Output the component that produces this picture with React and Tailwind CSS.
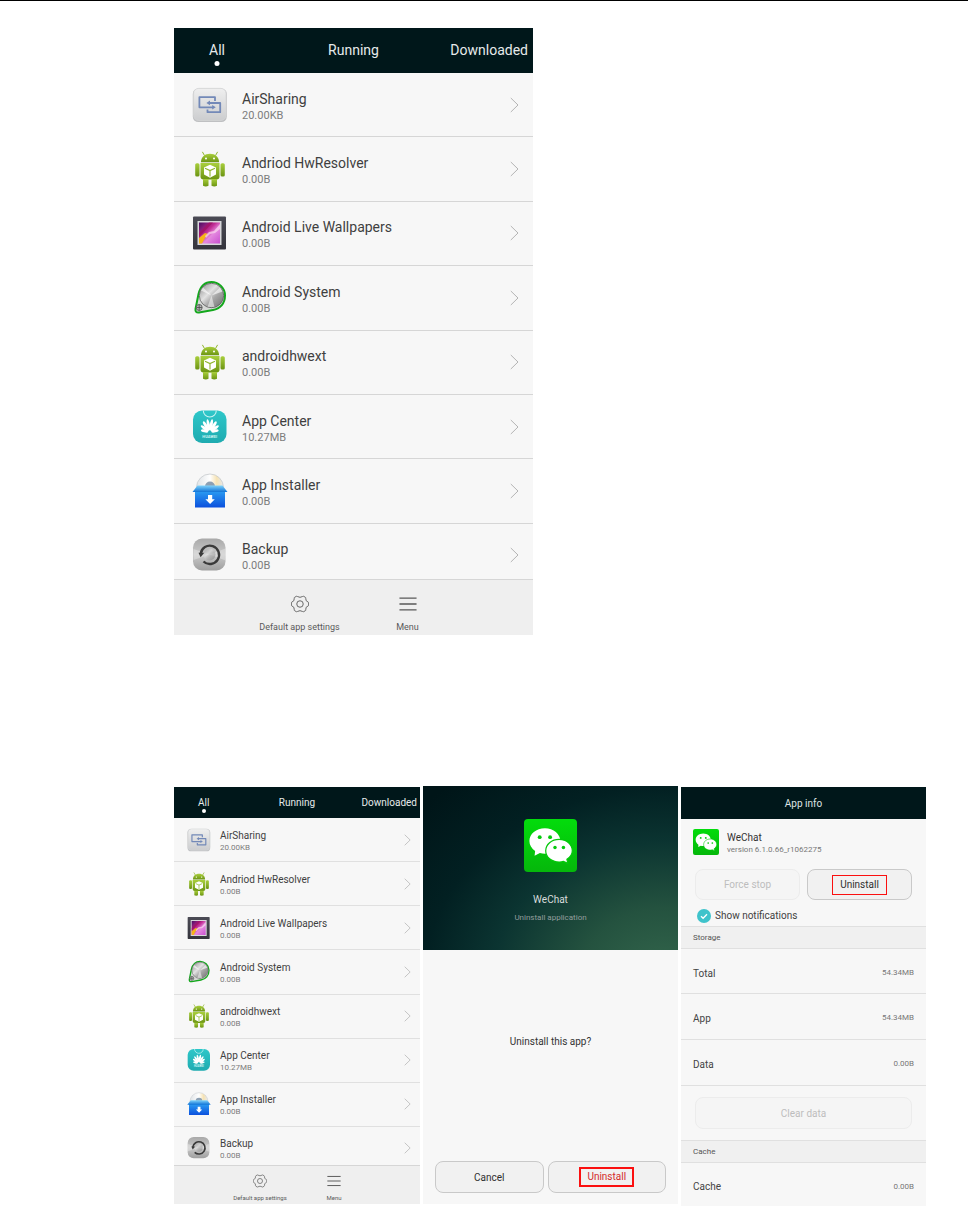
import clsx from "clsx";

/* SHARED GRADIENTS FOR THE APP ICONS */
const IconDefs = () => (
  <svg width="0" height="0" className="absolute" aria-hidden="true">
    <defs>
      <linearGradient id="silver" x1="0" y1="0" x2="0" y2="1">
        <stop offset="0" stopColor="#efefef" />
        <stop offset="1" stopColor="#cccdcf" />
      </linearGradient>
      <linearGradient id="robot" x1="0" y1="0" x2="0" y2="1">
        <stop offset="0" stopColor="#a9cf3c" />
        <stop offset="1" stopColor="#6c9413" />
      </linearGradient>
      <linearGradient id="frame" x1="0" y1="0" x2="0" y2="1">
        <stop offset="0" stopColor="#4b4b55" />
        <stop offset="1" stopColor="#34343c" />
      </linearGradient>
      <linearGradient id="photo" x1="0" y1="0" x2="1" y2="1">
        <stop offset="0" stopColor="#4a0d63" />
        <stop offset="0.4" stopColor="#c02a92" />
        <stop offset="0.6" stopColor="#e58adf" />
        <stop offset="1" stopColor="#c74fd0" />
      </linearGradient>
      <linearGradient id="teal" x1="0" y1="0" x2="0" y2="1">
        <stop offset="0" stopColor="#2ec7c9" />
        <stop offset="1" stopColor="#1fabb0" />
      </linearGradient>
      <linearGradient id="box" x1="0" y1="0" x2="0" y2="1">
        <stop offset="0" stopColor="#2a9cf2" />
        <stop offset="1" stopColor="#0c50dd" />
      </linearGradient>
      <linearGradient id="lid" x1="0" y1="0" x2="0" y2="1">
        <stop offset="0" stopColor="#7fd3fb" />
        <stop offset="1" stopColor="#1273d6" />
      </linearGradient>
      <linearGradient id="disc" x1="0" y1="0" x2="1" y2="0">
        <stop offset="0" stopColor="#dfe3e6" />
        <stop offset="0.5" stopColor="#ffffff" />
        <stop offset="0.75" stopColor="#f6e3b4" />
        <stop offset="1" stopColor="#e6e9ec" />
      </linearGradient>
      <linearGradient id="metal" x1="0" y1="0" x2="1" y2="1">
        <stop offset="0" stopColor="#8c8c8c" />
        <stop offset="0.4" stopColor="#e2e2e2" />
        <stop offset="0.6" stopColor="#a8a8a8" />
        <stop offset="1" stopColor="#6c6c6c" />
      </linearGradient>
      <linearGradient id="steel" x1="0" y1="0" x2="0" y2="1">
        <stop offset="0" stopColor="#a9a9a9" />
        <stop offset="0.5" stopColor="#c9c9c9" />
        <stop offset="1" stopColor="#9f9f9f" />
      </linearGradient>
      <linearGradient id="wechat" x1="0" y1="0" x2="0" y2="1">
        <stop offset="0" stopColor="#03dc0c" />
        <stop offset="1" stopColor="#05b70b" />
      </linearGradient>
    </defs>
  </svg>
);

const AirSharingIcon = ({ className }) => (
  <svg viewBox="0 0 36 36" className={className} aria-hidden="true">
    <rect x="0.8" y="1.4" width="34" height="33.6" rx="5.5" fill="#bfc0c2" />
    <rect x="1.6" y="1.4" width="32.4" height="32" rx="5" fill="url(#silver)" stroke="#d4d5d7" strokeWidth="0.8" />
    <g fill="none" stroke="#7389b8" strokeWidth="1.8" strokeLinejoin="round">
      <path d="M21 20.300H7.400V10.200H23V14" />
      <path d="M17.500 16H28.200V25.200H15.500V22.500" />
    </g>
    <path d="M18 13.600v4.600L14.400 16zM20.200 18v4.600l3.600-2.300z" fill="#7389b8" />
  </svg>
);

const RobotIcon = ({ className }) => (
  <svg viewBox="0 0 36 36" className={className} aria-hidden="true">
    <path d="M12.3 4.2 10.6 1.2M23.7 4.2l1.7-3" stroke="#8fb52c" strokeWidth="1" strokeLinecap="round" />
    <g fill="url(#robot)">
      <path d="M8.9 11.3C9 5.8 12.8 2.7 18 2.700S27 5.8 27.1 11.300z" />
      <path d="M8.5 12h19v13.500q0 3-3 3h-13q-3 0-3-3z" />
      <rect x="3.2" y="12.2" width="4.3" height="13.4" rx="1.6" />
      <rect x="28.5" y="12.2" width="4.3" height="13.4" rx="1.6" />
      <path d="M11 28h5.500v6.800q-2.700 1.400-5.500 0zM19.500 28H25v6.800q-2.700 1.400-5.500 0z" />
    </g>
    <circle cx="14" cy="7.6" r="1" fill="#fff" />
    <circle cx="22" cy="7.6" r="1" fill="#fff" />
    <path d="m18 13.800 6 2.700v7L18 26.700l-6-3.200v-7z" fill="#fff" />
    <path d="m13 17.300 5 2.300 5-2.300M18 19.600v6" fill="none" stroke="#8fb52c" strokeWidth="1.1" />
  </svg>
);

const WallpaperIcon = ({ className }) => (
  <svg viewBox="0 0 36 36" className={className} aria-hidden="true">
    <rect x="1" y="1.5" width="33" height="33" rx="1" fill="url(#frame)" />
    <rect x="5.5" y="6" width="24" height="24" fill="#d7d7da" />
    <rect x="7" y="7.5" width="21" height="21" fill="url(#photo)" />
    <path d="M7 18 17 7.500h4L7 22z" fill="#a30f5f" opacity="0.7" />
    <path d="M7 28.500V23l6-5 3 1-3 4-3 5.500z" fill="#f5b417" />
    <path d="m13 21 4-4 5-1 6-7v5l-5 4-5 1-4 4z" fill="#fbd9f0" opacity="0.7" />
  </svg>
);

const SystemIcon = ({ className }) => (
  <svg viewBox="0 0 36 36" className={className} aria-hidden="true">
    <path d="M6.500 14C8.500 6 13 2 19.500 2S33 7.500 33 15.500 28 29 21 30L7 32.500q-4 .5-3.500-3.500z" fill="#d7d9d7" stroke="#14a81d" strokeWidth="2" />
    <circle cx="19.5" cy="15.5" r="12.2" fill="url(#metal)" stroke="#606060" strokeWidth="0.8" />
    <path d="M19.500 15.500 9 10.500l2-3zM19.500 15.500l8.500-8 2.500 4z" fill="#fff" opacity="0.6" />
    <path d="m19.500 15.500-4 11.500h7z" fill="#fff" opacity="0.5" />
    <circle cx="7.2" cy="27.5" r="3" fill="#b5b5b5" stroke="#5b5b5b" strokeWidth="0.9" />
    <path d="M4.500 27.500h5.400M7.200 24.500v6" stroke="#484848" strokeWidth="0.8" />
  </svg>
);

const petals = [
  { angle: -78, length: 9 },
  { angle: -54, length: 11 },
  { angle: -32, length: 12.5 },
  { angle: -11, length: 13 },
  { angle: 11, length: 13 },
  { angle: 32, length: 12.5 },
  { angle: 54, length: 11 },
  { angle: 78, length: 9 },
];

const AppCenterIcon = ({ className }) => (
  <svg viewBox="0 0 36 36" className={className} aria-hidden="true">
    <rect x="1" y="1.5" width="33.5" height="32.5" rx="9" fill="url(#teal)" />
    <path d="M11.300 1.500a6.500 6.500 0 0 0 13 0" fill="none" stroke="#c8f2f2" strokeWidth="1.1" />
    <g fill="#fff">
      {petals.map(({ angle, length }) => (
        <ellipse
          key={angle}
          cx="17.8"
          cy={23 - length / 2 - 0.8}
          rx="1.5"
          ry={length / 2 - 0.8}
          transform={`rotate(${angle} 17.8 23)`}
        />
      ))}
    </g>
    <text x="17.8" y="28.8" textAnchor="middle" fontSize="4" fontWeight="700" fill="#c8f2f2">
      HUAWEI
    </text>
  </svg>
);

const InstallerIcon = ({ className }) => (
  <svg viewBox="0 0 36 36" className={className} aria-hidden="true">
    <circle cx="18" cy="14.5" r="13.5" fill="url(#disc)" stroke="#c7cace" strokeWidth="0.8" />
    <path d="M13 13.500a5 5 0 0 1 10 0z" fill="#8da0b3" />
    <path d="M3 18h30v16.500H3z" fill="url(#box)" />
    <path d="M5.500 12.500h25L35.500 19H.5z" fill="url(#lid)" />
    <path d="M16 22h4.200v4.300h2.600L18.100 31l-4.700-4.700H16z" fill="#fff" />
  </svg>
);

const BackupIcon = ({ className }) => (
  <svg viewBox="0 0 36 36" className={className} aria-hidden="true">
    <rect x="1" y="1.5" width="32.5" height="32" rx="9" fill="url(#steel)" />
    <path d="M17.500 17.500 1.500 12v11zM17.500 17.500l16-6v12z" fill="#e8e8e8" opacity="0.5" />
    <circle cx="17.5" cy="17.5" r="6" fill="url(#metal)" opacity="0.5" />
    <path d="M8.700 16.800A9.200 9.200 0 1 1 11.500 24.500" fill="none" stroke="#3a3a3a" strokeWidth="2.4" />
    <path d="M6.500 15.800h5.800l-3.700 4.400z" fill="#3a3a3a" />
  </svg>
);

const WeChatIcon = ({ className }) => (
  <svg viewBox="0 0 52 52" className={className} aria-hidden="true">
    <rect width="52" height="52" rx="4" fill="url(#wechat)" />
    <path d="M20.500 9C12 9 5.300 14.500 5.300 21.700c0 4 2.200 7.400 5.600 9.700L10.400 36l5.200-2.700c1.600.4 3.200.7 4.900.7C29 34 35.700 28.700 35.700 21.700S29 9 20.500 9z" fill="#fff" />
    <path d="M34.500 20c-7.500 0-13.200 5-13.200 11.200S27 42.200 34.500 42.200c1.500 0 2.900-.2 4.200-.6L43 43.500l-.9-3.900c3.200-2 5.300-5 5.300-8.400C47.400 25 42 20 34.500 20z" fill="#fff" stroke="#04c90b" strokeWidth="1.2" />
    <g fill="#04c90b">
      <circle cx="15.4" cy="17.8" r="1.9" />
      <circle cx="25.6" cy="17.8" r="1.9" />
      <circle cx="30.4" cy="28" r="1.7" />
      <circle cx="38.7" cy="28" r="1.7" />
    </g>
  </svg>
);

const GearIcon = ({ className }) => (
  <svg viewBox="0 0 20 20" className={className} fill="none" stroke="currentColor" strokeWidth="1" strokeLinejoin="round" aria-hidden="true">
    <path d="M5.900 1.500Q6.500 1.200 7.200 1.700 10 3.500 12.800 1.700 13.500 1.200 14.100 1.500L16 2.600Q16.600 3 16.400 3.800 16 6.800 18.900 7.800 19.600 8.100 19.600 8.700V11.300Q19.600 11.900 18.900 12.200 16 13.200 16.400 16.200 16.600 17 16 17.400L14.100 18.500Q13.500 18.800 12.800 18.300 10 16.500 7.200 18.300 6.500 18.800 5.900 18.500L4 17.400Q3.400 17 3.600 16.200 4 13.200 1.100 12.200.4 11.900.4 11.300V8.700Q.4 8.100 1.100 7.800 4 6.800 3.600 3.800 3.400 3 4 2.600Z" />
    <circle cx="10" cy="10" r="3.6" />
  </svg>
);

const MenuIcon = ({ className }) => (
  <svg viewBox="0 0 20 20" className={className} stroke="currentColor" strokeWidth="1.4" aria-hidden="true">
    <path d="M.5 3.500h19M.5 10h19M.5 16.500h19" />
  </svg>
);

const ChevronIcon = ({ className }) => (
  <svg viewBox="0 0 9 16" className={className} fill="none" stroke="#b4b4b4" strokeWidth="1" aria-hidden="true">
    <path d="M.8 1 8 8 .8 15" />
  </svg>
);

const apps = [
  { name: "AirSharing", size: "20.00KB", Icon: AirSharingIcon },
  { name: "Andriod HwResolver", size: "0.00B", Icon: RobotIcon },
  { name: "Android Live Wallpapers", size: "0.00B", Icon: WallpaperIcon },
  { name: "Android System", size: "0.00B", Icon: SystemIcon },
  { name: "androidhwext", size: "0.00B", Icon: RobotIcon },
  { name: "App Center", size: "10.27MB", Icon: AppCenterIcon },
  { name: "App Installer", size: "0.00B", Icon: InstallerIcon },
  { name: "Backup", size: "0.00B", Icon: BackupIcon },
];

const sizes = {
  lg: {
    header: "h-[45px] text-[14px]",
    firstTab: "ml-[35px]",
    lastTab: "mr-[5px]",
    dot: "-bottom-[5px] size-[5px]",
    viewport: "h-[506px]",
    list: "h-[515px]",
    line: "border-[#d6d6d6]",
    row: "pl-[18px] pr-[14px] gap-[14px]",
    icon: "size-9",
    name: "text-[14px] leading-5",
    size: "text-[11px] leading-[14px]",
    chevron: "h-4 w-[9px]",
    footer: "h-14 pt-[15px]",
    action: "w-[108px] gap-2 text-[9px] leading-[12px]",
    actionIcon: "size-[18px]",
  },
  sm: {
    header: "h-[31px] text-[10px]",
    firstTab: "ml-[24px]",
    lastTab: "mr-[3px]",
    dot: "-bottom-[3px] size-[4px]",
    viewport: "h-[347px]",
    list: "h-[353px]",
    line: "border-[#e0e0e0]",
    row: "pl-[13px] pr-[9px] gap-[9px]",
    icon: "size-6",
    name: "text-[10px] leading-[14px]",
    size: "text-[8px] leading-[10px]",
    chevron: "h-3 w-[7px]",
    footer: "h-[39px] pt-2",
    action: "w-[74px] gap-[6px] text-[6px] leading-[8px]",
    actionIcon: "size-[14px]",
  },
};

const AppList = ({ size, className }) => {
  const s = sizes[size];

  return (
    <section className={clsx("bg-[#f7f7f7]", className)}>
      {/* TABS */}
      <nav className={clsx("grid grid-cols-3 items-center bg-[#00171a] text-[#e6eaea]", s.header)}>
        <button className={clsx("relative justify-self-start", s.firstTab)}>
          All
          <span className={clsx("absolute left-1/2 -translate-x-1/2 rounded-full bg-white", s.dot)} />
        </button>
        <button>Running</button>
        <button className={clsx("justify-self-end", s.lastTab)}>Downloaded</button>
      </nav>

      {/* APPS */}
      <div className={clsx("overflow-hidden", s.viewport)}>
        <ul className={clsx("grid auto-rows-fr", s.list)}>
          {apps.map(({ name, size: appSize, Icon }) => (
            <li key={name} className={clsx("border-b", s.line)}>
              <button className={clsx("flex h-full w-full items-center text-left", s.row)}>
                <Icon className={clsx("shrink-0", s.icon)} />
                <span className="flex flex-1 flex-col pt-[2px]">
                  <span className={clsx("text-[#3f3f3f]", s.name)}>{name}</span>
                  <span className={clsx("text-[#7c7c7c]", s.size)}>{appSize}</span>
                </span>
                <ChevronIcon className={s.chevron} />
              </button>
            </li>
          ))}
        </ul>
      </div>

      {/* ACTIONS */}
      <footer className={clsx("flex items-start justify-center border-t border-[#d6d6d6] bg-[#efefef] text-[#5a5a5a]", s.footer)}>
        <button className={clsx("flex flex-col items-center whitespace-nowrap", s.action)}>
          <GearIcon className={s.actionIcon} />
          Default app settings
        </button>
        <button className={clsx("flex flex-col items-center", s.action)}>
          <MenuIcon className={s.actionIcon} />
          Menu
        </button>
      </footer>
    </section>
  );
};

const PanelButton = ({ children, className, ...props }) => (
  <button
    className={clsx(
      "flex items-center justify-center rounded-lg border text-[10px]",
      props.disabled
        ? "border-[#ececec] bg-[#f5f5f5] text-[#bdbdbd]"
        : "border-[#c9c9c9] bg-[#f1f1f1] text-[#2f2f2f]",
      className
    )}
    {...props}
  >
    {children}
  </button>
);

const UninstallDialog = () => (
  <section className="flex flex-col bg-[#f7f7f7] text-center">
    <header className="flex h-[164px] flex-col items-center bg-[#001518] bg-[radial-gradient(ellipse_at_95%_115%,#33664c_0%,#24523f_25%,#0b3431_50%,#022022_70%,transparent_95%)] pt-[33px]">
      <WeChatIcon className="size-[53px]" />
      <h2 className="mt-5 text-[10px] leading-4 text-[#d9dddd]">WeChat</h2>
      <p className="mt-1 text-[8px] leading-3 text-[#939e9d]">Uninstall application</p>
    </header>
    <p className="mt-[84px] text-[10px] leading-4 text-[#333333]">Uninstall this app?</p>
    <div className="mt-[111px] mb-[11px] grid grid-cols-[109fr_119fr] gap-1 px-3">
      <PanelButton className="h-8">Cancel</PanelButton>
      <PanelButton className="h-8">
        <span className="border-2 border-[#fb1010] px-[6px] leading-4 text-[#d42a2a]">Uninstall</span>
      </PanelButton>
    </div>
  </section>
);

const InfoRow = ({ label, value }) => (
  <div className="flex items-center justify-between px-3 pt-1">
    <dt className="text-[10px] text-[#444444]">{label}</dt>
    <dd className="text-[8px] text-[#777777]">{value}</dd>
  </div>
);

const SectionTitle = ({ children }) => (
  <h3 className="border-y border-[#e0e0e0] bg-[#f0f0f0] px-3 pt-px text-[8px] leading-5 text-[#555555]">
    {children}
  </h3>
);

const AppInfo = () => (
  <section className="mt-px bg-[#f7f7f7]">
    <h2 className="flex h-8 items-center justify-center bg-[#00171a] text-[10px] text-[#dfe4e4]">App info</h2>

    {/* APP */}
    <div className="flex items-center gap-2 px-3 pt-[10px]">
      <WeChatIcon className="size-[26px]" />
      <div className="pt-px">
        <p className="text-[10px] leading-[14px] text-[#333333]">WeChat</p>
        <p className="text-[8px] leading-[10px] text-[#777777]">version 6.1.0.66_r1062275</p>
      </div>
    </div>
    <div className="mt-[14px] grid grid-cols-2 gap-[7px] px-[14px]">
      <PanelButton disabled className="h-[31px]">Force stop</PanelButton>
      <PanelButton className="h-[31px]">
        <span className="border border-[#fb1010] px-[7px] leading-[18px]">Uninstall</span>
      </PanelButton>
    </div>
    <label className="mt-2 flex items-center gap-1 px-4 text-[10px] leading-4 text-[#3f3f3f]">
      <span className="relative flex size-[14px]">
        <input type="checkbox" defaultChecked className="size-[14px] appearance-none rounded-full bg-[#b8b8b8] checked:bg-[#3fc3cb]" />
        <svg viewBox="0 0 14 14" className="pointer-events-none absolute inset-0" fill="none" stroke="#fff" strokeWidth="1.3" aria-hidden="true">
          <path d="m4 7.200 2.100 2.100L10 5.200" />
        </svg>
      </span>
      Show notifications
    </label>

    {/* STORAGE */}
    <div className="mt-[2px]">
      <SectionTitle>Storage</SectionTitle>
      <dl className="grid h-[137px] auto-rows-fr divide-y divide-[#e0e0e0] border-b border-[#e0e0e0]">
        <InfoRow label="Total" value="54.34MB" />
        <InfoRow label="App" value="54.34MB" />
        <InfoRow label="Data" value="0.00B" />
      </dl>
      <div className="px-[14px] py-[11px]">
        <PanelButton disabled className="h-8 w-full">Clear data</PanelButton>
      </div>
    </div>

    {/* CACHE */}
    <SectionTitle>Cache</SectionTitle>
    <dl className="grid h-[43px]">
      <InfoRow label="Cache" value="0.00B" />
    </dl>
  </section>
);

const App = () => {
  return (
    <main className="border-t border-black bg-white pt-[27px] pr-[42px] pl-[174px] font-['Roboto',sans-serif]">
      <IconDefs />
      <AppList size="lg" className="max-w-[359px]" />

      <div className="mt-[151px] grid grid-cols-[246fr_255fr_245fr] items-start gap-[3px]">
        <AppList size="sm" className="mt-px" />
        <UninstallDialog />
        <AppInfo />
      </div>
    </main>
  );
};

export default App;
